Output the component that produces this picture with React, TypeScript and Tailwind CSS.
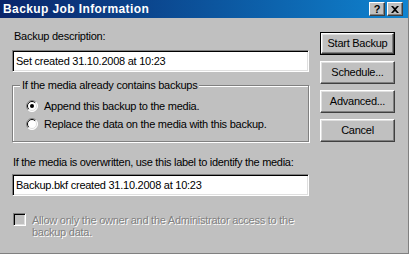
import React from "react";

const font = "font-['Liberation_Sans',Arial,sans-serif]";

function Radio({ checked }: { checked?: boolean }) {
  return (
    <svg width="12" height="12" viewBox="0 0 12 12" className="shrink-0">
      <circle cx="6" cy="6" r="5.5" fill="#fff" />
      <path d="M2.1 9.9 A5.5 5.5 0 0 1 9.9 2.1" fill="none" stroke="#808080" strokeWidth="1" />
      <path d="M9.9 2.1 A5.5 5.5 0 0 1 2.1 9.9" fill="none" stroke="#fff" strokeWidth="1" />
      <path d="M2.8 9.2 A4.5 4.5 0 0 1 9.2 2.8" fill="none" stroke="#000" strokeWidth="1" />
      <path d="M9.2 2.8 A4.5 4.5 0 0 1 2.8 9.2" fill="none" stroke="#dfdfdf" strokeWidth="1" />
      {checked && <circle cx="6" cy="6" r="2" fill="#000" />}
    </svg>
  );
}

function Field({ value }: { value: string }) {
  return (
    <div className="h-[22px] w-full bg-white border border-t-[#808080] border-l-[#808080] border-r-white border-b-white shadow-[inset_1px_1px_0_#000,inset_-1px_-1px_0_#dfdfdf] flex items-center pl-[3px] leading-none">
      {value}
    </div>
  );
}

function Button({ label, isDefault }: { label: string; isDefault?: boolean }) {
  const face = (
    <div className="h-full w-full bg-[#c0c0c0] border border-t-white border-l-white border-r-[#404040] border-b-[#404040] shadow-[inset_-1px_-1px_0_#808080,inset_1px_1px_0_#dfdfdf] flex items-center justify-center">
      {label}
    </div>
  );
  return isDefault ? (
    <div className="h-[23px] w-[75px] border border-black">{face}</div>
  ) : (
    <div className="h-[23px] w-[75px]">{face}</div>
  );
}

function TitleButton({ children }: { children: React.ReactNode }) {
  return (
    <div className="h-[14px] w-[16px] bg-[#c0c0c0] border border-t-white border-l-white border-r-[#404040] border-b-[#404040] shadow-[inset_-1px_-1px_0_#808080] flex items-center justify-center">
      {children}
    </div>
  );
}

export default function App() {
  return (
    <div className={`w-[409px] h-[254px] bg-[#c0c0c0] ${font} flex flex-col border-r border-b border-r-[#808080] border-b-[#808080] overflow-hidden`}>
      <div className="h-[18px] shrink-0 bg-gradient-to-r from-[#0a246a] to-[#1084d0] flex items-center pl-[3px] pr-[5px]">
        <span className="text-white font-bold text-[12px] tracking-[0.4px] leading-none flex-1">Backup Job Information</span>
        <div className="flex gap-[2px]">
          <TitleButton>
            <span className="text-[11px] font-bold leading-none text-black">?</span>
          </TitleButton>
          <TitleButton>
            <svg width="8" height="7" viewBox="0 0 8 7">
              <path d="M0 0h2l2 2 2-2h2L5 3.5 8 7H6L4 5 2 7H0l3-3.5z" fill="#000" />
            </svg>
          </TitleButton>
        </div>
      </div>

      <div className="flex flex-1 text-[11px] tracking-[-0.25px] text-black">
        <div className="w-[297px] ml-[12px] pt-[12px] flex flex-col">
          <div className="leading-[13px] pl-[2px]">Backup description:</div>
          <div className="mt-[7px]">
            <Field value="Set created 31.10.2008 at 10:23" />
          </div>

          <div className="relative mt-[13px] h-[57px] border border-[#808080] shadow-[1px_1px_0_#fff,inset_1px_1px_0_#fff]">
            <span className="absolute -top-[7px] left-[7px] px-[2px] bg-[#c0c0c0] leading-[13px]">
              If the media already contains backups
            </span>
            <div className="flex flex-col gap-[6px] pt-[14px] pl-[13px]">
              <label className="flex items-center gap-[6px] leading-[12px]">
                <Radio checked />
                <span>Append this backup to the media.</span>
              </label>
              <label className="flex items-center gap-[6px] leading-[12px]">
                <Radio />
                <span>Replace the data on the media with this backup.</span>
              </label>
            </div>
          </div>

          <div className="mt-[14px] leading-[13px] pl-[1px] whitespace-nowrap tracking-[-0.3px]">
            If the media is overwritten, use this label to identify the media:
          </div>
          <div className="mt-[5px]">
            <Field value="Backup.bkf created 31.10.2008 at 10:23" />
          </div>

          <div className="flex gap-[6px] mt-[17px] pl-[1px]">
            <div className="w-[13px] h-[13px] shrink-0 bg-[#c0c0c0] border border-t-[#808080] border-l-[#808080] border-r-white border-b-white shadow-[inset_1px_1px_0_#000,inset_-1px_-1px_0_#dfdfdf]" />
            <span className="text-[#808080] leading-[12px] [text-shadow:1px_1px_0_#fff] pt-[1px] whitespace-nowrap">
              Allow only the owner and the Administrator access to the
              <br />
              backup data.
            </span>
          </div>
        </div>

        <div className="ml-[11px] pt-[14px] flex flex-col gap-[6px]">
          <Button label="Start Backup" isDefault />
          <Button label="Schedule..." />
          <Button label="Advanced..." />
          <Button label="Cancel" />
        </div>
      </div>
    </div>
  );
}
